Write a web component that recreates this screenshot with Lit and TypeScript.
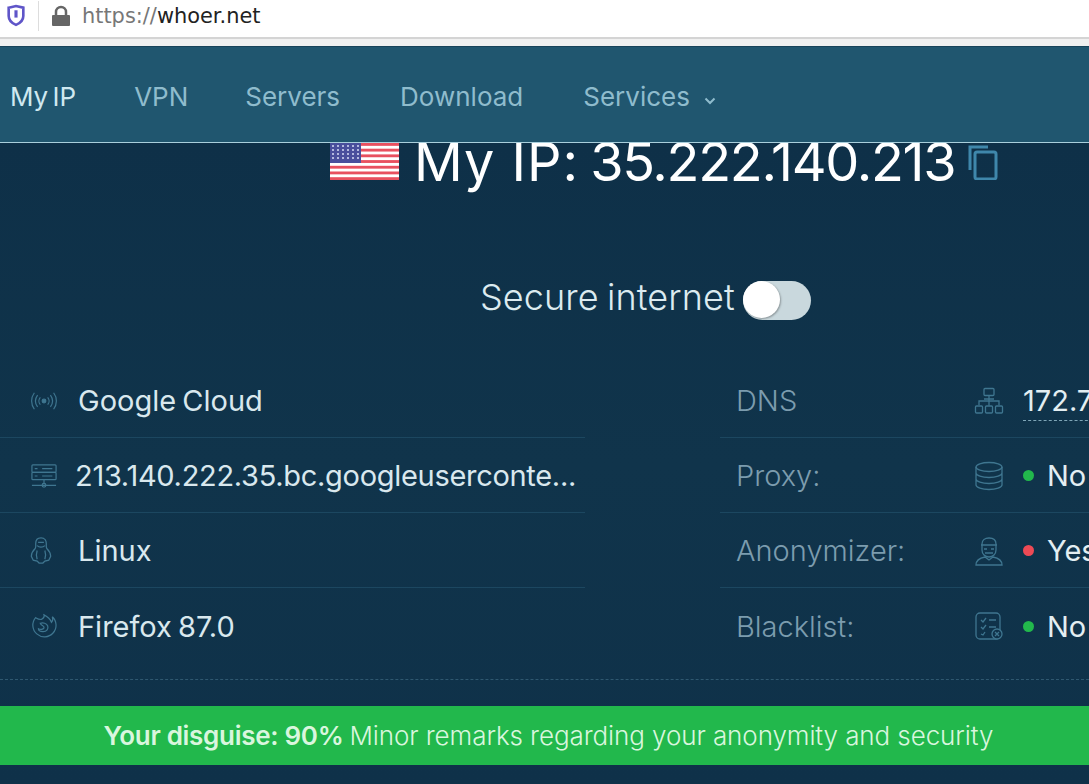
import { LitElement, html, css, svg } from "lit";
import { customElement } from "lit/decorators.js";

const I = (w: number, h: number, body: unknown, dw = w, dh = h) => html`<svg class="ic" width=${dw} height=${dh} viewBox="0 0 ${w} ${h}" fill="none" stroke="currentColor" stroke-width="1.3">${body}</svg>`;

const icons = {
  signal: I(30, 24, svg`<circle cx="15" cy="12" r="2" fill="currentColor"/><path d="M11 8a6 6 0 0 0 0 8M19 8a6 6 0 0 1 0 8M8 5.500a11 11 0 0 0 0 13M22 5.500a11 11 0 0 1 0 13M4.500 3a15 15 0 0 0 0 18M25.500 3a15 15 0 0 1 0 18"/>`, 28, 22),
  server: I(30, 28, svg`<rect x="2" y="2" width="26" height="8" rx="1"/><rect x="2" y="10" width="26" height="8" rx="1"/><path d="M5 6h3M5 14h3M13 6h11M13 14h11M15 18v5M2 24h26"/><circle cx="15" cy="24" r="2"/>`, 28, 26),
  linux: html`<svg class="ic" width="22" height="29" viewBox="4 0 22 30" fill="none" stroke="currentColor" stroke-width="1.300"><path d="M15 2c-4 0-5.500 3-5.500 6 0 2 .5 3-.5 5-2 2-4 5-4 8l2 4 4 1 2 2h4l2-2 4-1 2-4c0-3-2-6-4-8-1-2-.5-3-.5-5 0-3-1.500-6-5.500-6z"/><path d="M12 6.500h6M11 10c2 2 6 2 8 0M11 15c-1 3-1 6 0 9M19 15c1 3 1 6 0 9"/></svg>`,
  firefox: I(30, 28, svg`<path d="M6 5a12.500 12.500 0 1 0 18-1c1 3 0 5-1 6-1-3-4-6-8-8 1 3-1 4-3 5-1 0-3 0-6-2z"/><path d="M11 11c3-1 7 0 8 3s-1 6-5 6-5-2-5-3c2 1 5 1 6-1s-3-2-4-5z"/>`, 28, 26),
  net: I(30, 28, svg`<rect x="10" y="1.500" width="10" height="7" rx="1"/><path d="M15 8.500v10M5 18v-4h20v4M10 12h10"/><rect x="1.500" y="19" width="7" height="7" rx="1"/><rect x="11.500" y="19" width="7" height="7" rx="1"/><rect x="21.500" y="19" width="7" height="7" rx="1"/>`),
  db: I(30, 30, svg`<ellipse cx="15" cy="6" rx="13" ry="4.500"/><path d="M2 6v18c0 2.500 6 4.500 13 4.500s13-2 13-4.500V6M2 12c0 2.500 6 4.500 13 4.500s13-2 13-4.500M2 18c0 2.500 6 4.500 13 4.500s13-2 13-4.500"/>`),
  anon: I(30, 30, svg`<path d="M8 8c0-4 3-6 7-6s7 2 7 6v6c0 4-3 7-7 7s-7-3-7-7z"/><path d="M7 9h16M10 13h3M17 13h3M11 17h8M2 29c0-5 4-7 9-8l4 3 4-3c5 1 9 3 9 8z"/>`),
  list: I(30, 30, svg`<rect x="2" y="2" width="24" height="26" rx="4"/><path d="M7 9l2 2 3-4M7 16l2 2 3-4M7 23l2 1 2-3M15 9h7M15 16h7"/><circle cx="23" cy="23" r="5" fill="#10324a"/><path d="M21 21l4 4M25 21l-4 4"/>`),
};

const flag = svg`<svg class="flag" width="69" height="37" viewBox="0 0 69 37">
  <rect width="69" height="37" rx="2" fill="#fff"/>
  ${[0, 2, 4, 6, 8, 10, 12].map((i) => svg`<rect y=${i * 2.85} width="69" height="2.850" fill="#e8505f"/>`)}
  <rect width="31" height="20" fill="#4a4f9c"/>
  ${[3, 7, 11, 15].map((y) => [3, 8, 13, 18, 23, 28].map((x) => svg`<circle cx=${x} cy=${y} r="1" fill="#d8dcf5"/>`))}
</svg>`;

const left = [
  { icon: icons.signal, text: "Google Cloud", tight: false },
  { icon: icons.server, text: "213.140.222.35.bc.googleuserconte...", tight: true },
  { icon: icons.linux, text: "Linux", tight: false },
  { icon: icons.firefox, text: "Firefox 87.0", tight: false },
];

const right = [
  { label: "DNS", icon: icons.net, value: "172.7", dot: "" },
  { label: "Proxy:", icon: icons.db, value: "No", dot: "green" },
  { label: "Anonymizer:", icon: icons.anon, value: "Yes", dot: "red" },
  { label: "Blacklist:", icon: icons.list, value: "No", dot: "green" },
];

@customElement("app-root")
export class AppRoot extends LitElement {
  static styles = css`
    :host {
      display: block;
      width: 1089px;
      height: 784px;
      overflow: hidden;
      background: #fff;
      font-family: Inter, "Liberation Sans", sans-serif;
    }
    .urlbar {
      height: 37px;
      display: flex;
      align-items: center;
      background: #fff;
      box-sizing: border-box;
      padding: 0 0 6px 6px;
      font: 20.900px "DejaVu Sans", sans-serif;
      color: #222;
    }
    .shield { margin-right: 12px; }
    .sep { width: 1px; height: 30px; background: #ddd; margin-right: 12px; }
    .lock { margin-right: 11px; }
    .scheme { color: #777; }
    .chrome-gap {
      height: 7px;
      background: #f0f0f0;
      border-top: 2px solid #d4d4d4;
    }
    nav {
      height: 97px;
      box-sizing: border-box;
      background: #20566f;
      border-bottom: 1px solid #a9cfdc;
      border-top: 1px solid #17435a;
      display: flex;
      align-items: center;
      gap: 60px;
      padding: 4px 0 0 10px;
      font-size: 26px;
      word-spacing: -3px;
      color: #8fbccd;
      position: relative;
      z-index: 1;
    }
    nav .active { color: #cfe8f0; margin-right: -2px; }
    nav .vpn { margin-right: -3px; }
    .chev { margin-left: 14px; vertical-align: 1px; }
    main {
      height: 641px;
      background: linear-gradient(180deg, #0e3048 0%, #10344b 50%, #0f3149 100%);
      overflow: hidden;
    }
    .hero {
      height: 38px;
      display: flex;
      align-items: flex-end;
      padding-left: 330px;
    }
    .flag { flex: none; display: block; margin-bottom: 1px; }
    h1 {
      margin: 0 0 -8px 15px;
      font-size: 54px;
      line-height: 54px;
      font-weight: 400;
      color: #fff;
      white-space: nowrap;
      flex: none;
      display: flex;
      gap: 11px;
    }
    .h-label { letter-spacing: 1px; }
    .h-ip { letter-spacing: -1.300px; }
    .copy { flex: none; margin: 0 0 1px 13px; color: #3f87ab; }
    .secure {
      display: flex;
      align-items: center;
      padding-left: 480px;
      margin-top: 99px;
      gap: 8px;
      height: 40px;
      font-size: 36px;
      font-weight: 300;
      color: #dcebf0;
      letter-spacing: 0.100px;
      word-spacing: -2px;
    }
    .secure span { position: relative; top: -3px; }
    .toggle {
      width: 68px;
      height: 39px;
      border-radius: 20px;
      background: #c9d8dd;
      flex: none;
      display: flex;
    }
    .knob {
      width: 37px;
      height: 37px;
      border-radius: 50%;
      background: #fff;
      box-shadow: 1px 1px 2px rgba(0, 0, 0, 0.3);
    }
    .table {
      margin-top: 43px;
      display: grid;
      grid-template-columns: 585px 369px;
      column-gap: 135px;
      font-size: 29px;
      word-spacing: -2px;
    }
    .row {
      height: 75px;
      box-sizing: border-box;
      padding-top: 1px;
      display: flex;
      align-items: center;
      border-bottom: 1px solid #1c4760;
      white-space: nowrap;
    }
    .row.last { border-bottom: none; }
    .ic { display: block; color: #3f7690; flex: none; }
    .l-ic { flex: none; width: 28px; margin-left: 30px; margin-right: 20px; display: flex; }
    .l-ic.tight { margin-right: 17px; }
    .val { color: #d9e8ee; }
    .l-ic.tight + .val { letter-spacing: -0.300px; }
    .r-label { flex: none; width: 254px; padding-left: 16px; box-sizing: border-box; color: #7c9cae; font-weight: 300; }
    .r-ic { flex: none; width: 30px; margin-right: 19px; }
    .r-val { display: flex; align-items: center; color: #e3eef2; flex: 1; }
    .dns { border-bottom: 1px dashed #7fa6b8; flex: 1; line-height: 36px; padding: 3px 0 1px; }
    .dot { width: 11px; height: 11px; border-radius: 50%; margin-right: 13px; flex: none; }
    .dot.green { background: #22b84c; }
    .dot.red { background: #ee4a55; }
    .dash { margin-top: 16px; border-top: 1px dashed #2f5870; }
    .banner {
      margin-top: 26px;
      height: 59px;
      box-sizing: border-box;
      padding-left: 8px;
      background: #22b84c;
      color: #d9f6de;
      display: flex;
      align-items: center;
      justify-content: center;
      gap: 6px;
      font-size: 26px;
      font-weight: 300;
      letter-spacing: -0.090px;
      white-space: nowrap;
    }
    .banner b { font-weight: 600; letter-spacing: -0.300px; }
  `;

  render() {
    return html`
      <div class="urlbar">
        <svg class="shield" width="20" height="23" viewBox="0 0 18 22" fill="none">
          <path d="M2 3.500 9 2l7 1.500v8c0 4-3.500 7-7 8.500-3.500-1.500-7-4.500-7-8.500z" stroke="#5f55c8" stroke-width="2.500"/>
          <path d="M9 6v7" stroke="#5f55c8" stroke-width="3"/>
        </svg>
        <div class="sep"></div>
        <svg class="lock" width="20" height="22" viewBox="0 0 20 22">
          <path d="M5 10V7a5 5 0 0 1 10 0v3" fill="none" stroke="#666" stroke-width="2.500"/>
          <rect x="1" y="10" width="18" height="11" rx="1" fill="#666"/>
        </svg>
        <span><span class="scheme">https://</span>whoer.net</span>
      </div>
      <div class="chrome-gap"></div>
      <nav>
        <span class="active">My IP</span>
        <span class="vpn">VPN</span>
        <span>Servers</span>
        <span>Download</span>
        <span>Services<svg class="chev" width="12" height="8" viewBox="0 0 12 8" fill="none" stroke="currentColor" stroke-width="2"><path d="M1.500 1.500 6 6l4.500-4.500"/></svg></span>
      </nav>
      <main>
        <div class="hero">
          ${flag}
          <h1><span class="h-label">My IP:</span><span class="h-ip">35.222.140.213</span></h1>
          <svg class="copy" width="30" height="36" viewBox="0 0 30 36" fill="none" stroke="currentColor" stroke-width="3">
            <path d="M2 26V3h18"/>
            <rect x="7" y="8" width="21" height="27" rx="2"/>
          </svg>
        </div>
        <div class="secure"><span>Secure internet</span><div class="toggle"><div class="knob"></div></div></div>
        <div class="table">
          <div>
            ${left.map((r, i) => html`<div class="row ${i === 3 ? "last" : ""}">
              <div class="l-ic ${r.tight ? "tight" : ""}">${r.icon}</div>
              <span class="val">${r.text}</span>
            </div>`)}
          </div>
          <div>
            ${right.map((r, i) => html`<div class="row ${i === 3 ? "last" : ""}">
              <div class="r-label">${r.label}</div>
              <div class="r-ic">${r.icon}</div>
              <div class="r-val">
                ${r.dot ? html`<span class="dot ${r.dot}"></span><span>${r.value}</span>` : html`<span class="dns">${r.value}</span>`}
              </div>
            </div>`)}
          </div>
        </div>
        <div class="dash"></div>
        <div class="banner"><b>Your disguise: 90%</b><span>Minor remarks regarding your anonymity and security</span></div>
      </main>
    `;
  }
}
